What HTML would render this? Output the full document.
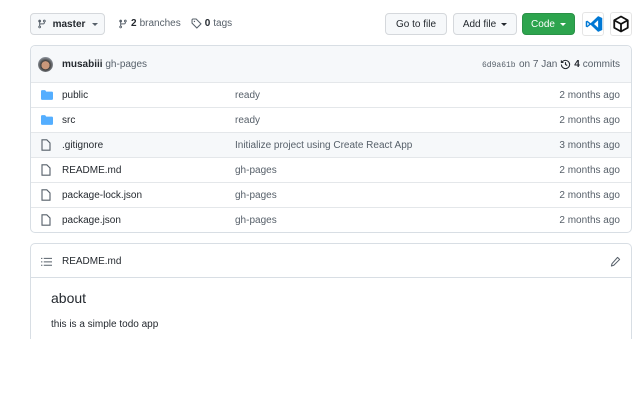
<!DOCTYPE html>
<html><head><meta charset="utf-8"><style>
*{box-sizing:border-box;margin:0;padding:0}
body{width:640px;height:400px;background:#fff;font-family:"Liberation Sans",Arial,sans-serif;font-size:10px;color:#24292f;position:relative;overflow:hidden}
.abs{position:absolute}
.btn{position:absolute;top:13px;height:22px;border:1px solid #d5d8dc;border-radius:4px;background:#f6f8fa;font-size:10px;display:flex;align-items:center;justify-content:center;color:#24292f}
.caret{display:inline-block;width:0;height:0;border-left:3px solid transparent;border-right:3px solid transparent;border-top:3px solid currentColor;margin-left:5px}
.box{position:absolute;left:30px;width:602px;border:1px solid #d8dee4;border-radius:5px}
.row{position:absolute;left:0;right:0;height:25px;border-top:1px solid #e4e7ea;display:flex;align-items:center}
.row .n{position:absolute;left:31px;color:#24292f}
.row .m{position:absolute;left:204px;color:#57606a}
.row .d{position:absolute;right:11px;color:#57606a}
.row svg{position:absolute;left:10px}
</style></head><body>
<div class="btn" style="left:30px;width:75px;font-weight:bold"><svg width="10" height="10" viewBox="0 0 16 16" style="margin-right:6px"><path fill="#57606a" d="M11.75 2.5a.75.75 0 100 1.5.75.75 0 000-1.5zm-2.25.75a2.25 2.25 0 113 2.12V6A2.5 2.5 0 0110 8.5H6a1 1 0 00-1 1v1.13a2.25 2.25 0 11-1.5 0V5.37a2.25 2.25 0 111.5 0v1.84A2.5 2.5 0 016 7h4a1 1 0 001-1v-.63A2.25 2.25 0 019.5 3.25zM4.25 12a.75.75 0 100 1.5.75.75 0 000-1.5zM3.5 3.25a.75.75 0 111.5 0 .75.75 0 01-1.5 0z"/></svg>master<span class="caret" style="color:#57606a;margin-left:7px"></span></div>
<div class="abs" style="left:118px;top:18px;color:#57606a;display:flex;align-items:center"><svg width="10" height="10" viewBox="0 0 16 16" style="margin-right:3px"><path fill="#57606a" d="M11.75 2.5a.75.75 0 100 1.5.75.75 0 000-1.5zm-2.25.75a2.25 2.25 0 113 2.12V6A2.5 2.5 0 0110 8.5H6a1 1 0 00-1 1v1.13a2.25 2.25 0 11-1.5 0V5.37a2.25 2.25 0 111.5 0v1.84A2.5 2.5 0 016 7h4a1 1 0 001-1v-.63A2.25 2.25 0 019.5 3.25zM4.25 12a.75.75 0 100 1.5.75.75 0 000-1.5zM3.5 3.25a.75.75 0 111.5 0 .75.75 0 01-1.5 0z"/></svg><b style="color:#24292f;margin-right:3px">2</b>branches
<svg width="11" height="11" viewBox="0 0 16 16" style="margin:0 3px 0 10px"><path fill="none" stroke="#57606a" stroke-width="1.5" d="M1.5 2.5v5l7 7 6-6-7-7h-5z"/><circle cx="5" cy="5" r="1" fill="#57606a"/></svg><b style="color:#24292f;margin-right:3px">0</b>tags</div>
<div class="btn" style="left:385px;width:62px">Go to file</div>
<div class="btn" style="left:453px;width:64px">Add file<span class="caret"></span></div>
<div class="btn" style="left:522px;width:53px;background:#2da44e;border-color:#2a9147;color:#fff">Code<span class="caret"></span></div>
<div class="abs" style="left:582px;top:12px;width:22px;height:24px;border:1px solid #e5e5e5;border-radius:3px"><svg width="18" height="18" viewBox="0 0 24 24" style="position:absolute;left:2px;top:2px"><path fill="#0078d4" d="M17.5 1.5L23 4v16l-5.5 2.5L7.5 13 3 16.5 1 15.5v-7l2-1L7.5 11 17.5 1.5zM17.5 7l-5.5 5 5.5 5V7zM3 9.5v5l2.5-2.5L3 9.5z"/></svg></div>
<div class="abs" style="left:610px;top:12px;width:22px;height:24px;border:1px solid #e5e5e5;border-radius:3px"><svg width="18" height="18" viewBox="0 0 24 24" style="position:absolute;left:1px;top:2px"><path fill="none" stroke="#111" stroke-width="2.4" stroke-linejoin="round" d="M12 2l9 5v10l-9 5-9-5V7zM3 7l9 5 9-5M12 12v10"/></svg></div>

<div class="box" style="top:45px;height:188px">
 <div class="abs" style="left:0;right:0;top:0;height:37px;background:#f6f8fa;border-radius:5px 5px 0 0"></div>
 <div class="abs" style="left:7px;top:11px;width:15px;height:15px;border-radius:50%;background:radial-gradient(circle at 50% 55%,#c9977a 0 35%,#3c3a38 38%,#8a9098 70%)"></div>
 <div class="abs" style="left:31px;top:13px"><b>musabiii</b> <span style="color:#57606a">gh-pages</span></div>
 <div class="abs" style="left:451px;top:15px;color:#57606a;font-family:'Liberation Mono',monospace;font-size:8px">6d9a61b</div>
 <div class="abs" style="left:488px;top:13px;color:#57606a">on 7 Jan</div>
 <div class="abs" style="right:11px;top:13px;color:#57606a;display:flex;align-items:center"><svg width="11" height="11" viewBox="0 0 16 16" style="margin-right:3px"><path fill="none" stroke="#24292f" stroke-width="1.6" d="M2 8a6 6 0 106-6 6 6 0 00-5 2.7M2 2v3h3M8 4.5V8l2.5 1.5"/></svg><b style="color:#24292f;margin-right:3px">4</b>commits</div>
 <div class="row" style="top:36px"><svg width="12" height="10" viewBox="0 0 16 13"><path fill="#54aeff" d="M0 1.5A1.5 1.5 0 011.5 0h4l1.5 2h7.5A1.5 1.5 0 0116 3.5v8a1.5 1.5 0 01-1.5 1.5h-13A1.5 1.5 0 010 11.5z"/></svg><span class="n">public</span><span class="m">ready</span><span class="d">2 months ago</span></div>
 <div class="row" style="top:61px"><svg width="12" height="10" viewBox="0 0 16 13"><path fill="#54aeff" d="M0 1.5A1.5 1.5 0 011.5 0h4l1.5 2h7.5A1.5 1.5 0 0116 3.5v8a1.5 1.5 0 01-1.5 1.5h-13A1.5 1.5 0 010 11.5z"/></svg><span class="n">src</span><span class="m">ready</span><span class="d">2 months ago</span></div>
 <div class="row" style="top:86px;background:#f6f8fa"><svg width="10" height="12" viewBox="0 0 12 15"><path fill="none" stroke="#57606a" stroke-width="1.4" d="M1 1h6l4 4v9H1z"/></svg><span class="n">.gitignore</span><span class="m">Initialize project using Create React App</span><span class="d">3 months ago</span></div>
 <div class="row" style="top:111px"><svg width="10" height="12" viewBox="0 0 12 15"><path fill="none" stroke="#57606a" stroke-width="1.4" d="M1 1h6l4 4v9H1z"/></svg><span class="n">README.md</span><span class="m">gh-pages</span><span class="d">2 months ago</span></div>
 <div class="row" style="top:136px"><svg width="10" height="12" viewBox="0 0 12 15"><path fill="none" stroke="#57606a" stroke-width="1.4" d="M1 1h6l4 4v9H1z"/></svg><span class="n">package-lock.json</span><span class="m">gh-pages</span><span class="d">2 months ago</span></div>
 <div class="row" style="top:161px"><svg width="10" height="12" viewBox="0 0 12 15"><path fill="none" stroke="#57606a" stroke-width="1.4" d="M1 1h6l4 4v9H1z"/></svg><span class="n">package.json</span><span class="m">gh-pages</span><span class="d">2 months ago</span></div>
</div>

<div class="box" style="top:243px;height:110px;border-bottom:none;border-radius:5px 5px 0 0">
 <div class="abs" style="left:0;right:0;top:33px;border-top:1px solid #d8dee4"></div>
 <svg class="abs" style="left:10px;top:13px" width="11" height="10" viewBox="0 0 16 14"><path fill="#57606a" d="M0 1h2v1.5H0zM4 1h12v1.5H4zM0 6h2v1.5H0zM4 6h12v1.5H4zM0 11h2v1.5H0zM4 11h12v1.5H4z"/></svg>
 <div class="abs" style="left:31px;top:12px">README.md</div>
 <svg class="abs" style="right:10px;top:12px" width="11" height="11" viewBox="0 0 16 16"><path fill="none" stroke="#57606a" stroke-width="1.5" stroke-linejoin="round" d="M11 2l3 3-8.5 8.5L2 14.5l1-3.5z"/></svg>
 <div class="abs" style="left:20px;top:46px;font-size:14px;color:#24292f">about</div>
 <div class="abs" style="left:20px;top:75px;font-size:10px">this is a simple todo app</div>
</div>
<div class="abs" style="left:0;top:339px;width:640px;height:61px;background:#fff"></div>
</body></html>
